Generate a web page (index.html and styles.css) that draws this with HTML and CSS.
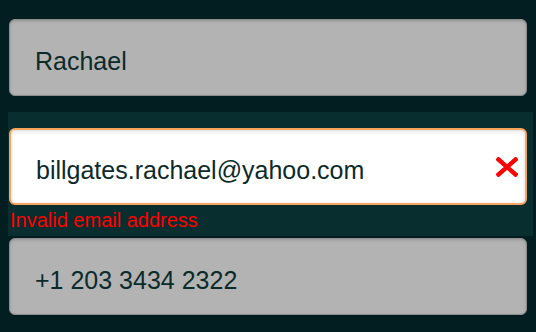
FILE: index.html
```html
<!DOCTYPE html>
<html lang="en">
<head>
<meta charset="utf-8">
<title>Form</title>
<link rel="stylesheet" href="styles.css">
</head>
<body>
<div class="form">
  <div class="input">Rachael</div>
  <div class="error-group">
    <div class="input invalid">
      <span class="value">billgates.rachael@yahoo.com</span>
      <svg class="clear" width="22" height="20" viewBox="0 0 22 20" aria-hidden="true">
        <path d="M2.5 2.5 L19.5 17.5 M19.5 2.5 L2.5 17.5" stroke="#ff0000" stroke-width="4.4" stroke-linecap="square" fill="none"/>
      </svg>
    </div>
    <div class="error-msg">Invalid email address</div>
  </div>
  <div class="input">+1 203 3434 2322</div>
</div>
</body>
</html>
```
FILE: styles.css
```css
html, body {
  margin: 0;
  padding: 0;
}
body {
  background: #031e20;
  font-family: "Liberation Sans", Arial, sans-serif;
  width: 536px;
  height: 332px;
  overflow: hidden;
}
.form {
  padding-top: 19px;
  display: flex;
  flex-direction: column;
}
.input {
  box-sizing: border-box;
  width: 518px;
  height: 77px;
  margin-left: 9px;
  background: #b3b3b3;
  border: 1px solid #8e8e8e;
  border-radius: 6px;
  box-shadow: inset 0 1px 3px rgba(0, 0, 0, 0.18);
  display: flex;
  align-items: center;
  padding: 8px 8px 0 25px;
  font-size: 25px;
  color: #0b2a2a;
}
.error-group {
  margin: 16px 0 2px 8px;
  width: 525px;
  background: #082e2f;
  padding: 16px 0 4px 1px;
  box-sizing: border-box;
}
.error-group .input {
  margin-left: 0;
}
.input.invalid {
  background: #ffffff;
  border: 2px solid #f7a45c;
  box-shadow: inset 0 1px 4px rgba(0, 0, 0, 0.15);
  padding-left: 25px;
  padding-right: 7px;
  justify-content: space-between;
}
.clear {
  margin-top: -8px;
  flex: none;
}
.error-msg {
  margin-top: 3px;
  margin-left: 1px;
  font-size: 20px;
  line-height: 24px;
  color: #ff0000;
}
```
